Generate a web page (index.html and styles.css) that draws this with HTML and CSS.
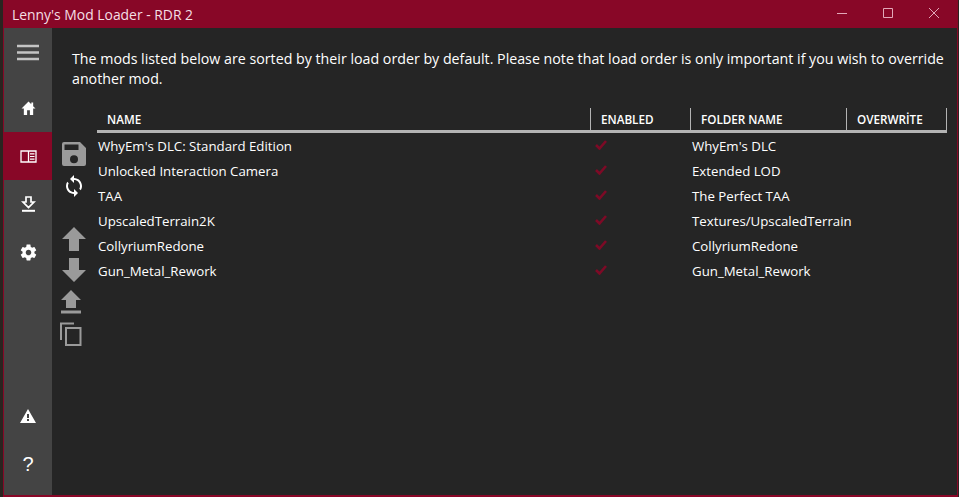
FILE: index.html
```html
<!DOCTYPE html>
<html lang="en">
<head>
  <meta charset="UTF-8" />
  <title>Lenny's Mod Loader - RDR 2</title>
  <link rel="stylesheet" href="styles.css">
</head>
<body>
  <div class="window">
    <header class="titlebar">
      <span class="title">Lenny's Mod Loader - RDR 2</span>
      <div class="win-buttons">
        <svg width="46" height="28" viewBox="0 0 46 28"><path d="M18 13.500h10" stroke="#e2a8b8" fill="none"/></svg>
        <svg width="46" height="28" viewBox="0 0 46 28"><path d="M18.500 8.500h9v9h-9z" stroke="#e2a8b8" fill="none"/></svg>
        <svg width="46" height="28" viewBox="0 0 46 28"><path d="M18 8l10 10M28 8l-10 10" stroke="#e2a8b8" fill="none"/></svg>
      </div>
    </header>
    <div class="main">
      <aside class="sidebar">
        <div class="nav-item nav-menu">
          <svg width="24" height="18" viewBox="0 0 24 18"><path d="M1 2h22M1 8.500h22M1 15h22" stroke="#c4c4c4" stroke-width="2.400" fill="none"/></svg>
        </div>
        <div class="nav-item">
          <svg width="15" height="14" viewBox="0 0 16 15"><path d="M8 0.500L0.500 8H3V15H6.500V10H9.500V15H13V8H15.500L13 5.500V1.500H11V3.500z" fill="#fff"/></svg>
        </div>
        <div class="nav-item active">
          <svg width="17" height="13" viewBox="0 0 17 13"><path d="M1 1h15v11H1z" stroke="#fff" stroke-width="1.300" fill="none"/><path d="M8.500 1v11" stroke="#fff" stroke-width="1.300"/><path d="M10 3.800h4.500M10 6.500h4.500M10 9.200h4.500" stroke="#fff" stroke-width="1.200"/></svg>
        </div>
        <div class="nav-item">
          <svg width="15" height="16" viewBox="0 0 15 16"><path d="M5 1h5v5h3L7.500 11.500 2 6h3z" fill="none" stroke="#fff" stroke-width="1.700"/><path d="M1 14.800h13" stroke="#fff" stroke-width="2"/></svg>
        </div>
        <div class="nav-item">
          <svg width="19" height="19" viewBox="0 0 24 24"><path fill="#fff" d="M19.430 12.980c.04-.32.070-.64.070-.98s-.030-.660-.070-.980l2.110-1.650c.19-.150.240-.420.120-.640l-2-3.460c-.12-.220-.390-.300-.610-.220l-2.490 1c-.520-.400-1.080-.730-1.690-.980l-.380-2.650C14.460 2.180 14.250 2 14 2h-4c-.250 0-.460.180-.490.420l-.380 2.650c-.610.250-1.170.590-1.690.980l-2.490-1c-.230-.090-.490 0-.610.220l-2 3.460c-.130.220-.070.490.120.640l2.110 1.650c-.040.320-.070.650-.070.980s.030.660.070.980l-2.110 1.650c-.190.150-.240.420-.120.640l2 3.460c.12.220.390.300.610.220l2.490-1c.520.400 1.080.730 1.690.980l.380 2.650c.030.240.240.420.490.420h4c.250 0 .460-.180.490-.420l.380-2.650c.610-.250 1.170-.590 1.690-.980l2.490 1c.230.090.490 0 .610-.220l2-3.460c.12-.220.070-.490-.120-.640l-2.110-1.650zM12 15.500c-1.930 0-3.500-1.570-3.500-3.500s1.570-3.500 3.500-3.500 3.500 1.570 3.500 3.500-1.570 3.500-3.500 3.500z"/></svg>
        </div>
        <div class="nav-spacer"></div>
        <div class="nav-item">
          <svg width="16" height="14" viewBox="0 0 16 14"><path fill-rule="evenodd" d="M8 0L16 14H0zM7 5v4h2V5zM7 10v2h2v-2z" fill="#fff"/></svg>
        </div>
        <div class="nav-item help">?</div>
      </aside>
      <section class="content">
        <p class="intro">The mods listed below are sorted by their load order by default. Please note that load order is only important if you wish to override another mod.</p>
        <div class="list-area">
          <div class="tools">
            <svg width="24" height="24" viewBox="0 0 24 24"><path fill-rule="evenodd" d="M2 0H18L24 6V22a2 2 0 0 1-2 2H2a2 2 0 0 1-2-2V2a2 2 0 0 1 2-2zM2.500 2.500V8H16.500V2.500zM12 13.300a4 4 0 1 0 0 8 4 4 0 0 0 0-8z" fill="#9a9a9a"/></svg>
            <svg class="tool-sync" width="18" height="22" viewBox="3 1 18 22"><path fill="#fff" d="M12 4V1L8 5l4 4V6c3.310 0 6 2.690 6 6 0 1.010-.250 1.970-.700 2.800l1.460 1.460C19.540 15.030 20 13.570 20 12c0-4.420-3.580-8-8-8zm0 14c-3.310 0-6-2.690-6-6 0-1.010.250-1.970.700-2.800L5.240 7.740C4.460 8.970 4 10.430 4 12c0 4.420 3.580 8 8 8v3l4-4-4-4v3z"/></svg>
            <svg class="tool-up" width="24" height="24" viewBox="0 0 24 24"><path d="M12 0L24 12H17V24H7V12H0z" fill="#9a9a9a"/></svg>
            <svg class="tool-down" width="24" height="24" viewBox="0 0 24 24"><path d="M12 24L24 12H17V0H7V12H0z" fill="#9a9a9a"/></svg>
            <svg class="tool-top" width="20" height="24" viewBox="0 0 20 24"><path d="M10 0L20 10H15V18H5V10H0z" fill="#9a9a9a"/><path d="M0 22h20" stroke="#9a9a9a" stroke-width="3"/></svg>
            <svg class="tool-copy" width="22" height="24" viewBox="0 0 22 24"><path d="M1 18V1.500H14" stroke="#9a9a9a" stroke-width="2" fill="none"/><path d="M6 6h14.500v17H6z" stroke="#9a9a9a" stroke-width="2" fill="none"/></svg>
          </div>
          <div class="mods">
            <div class="mods-head">
              <div class="col-name">NAME</div>
              <div class="col-enabled">ENABLED</div>
              <div class="col-folder">FOLDER NAME</div>
              <div class="col-over">OVERWRİTE</div>
            </div>
            <div class="mod-row">
              <div class="cell-name">WhyEm's DLC: Standard Edition</div>
              <div class="cell-enabled"><svg width="12" height="10" viewBox="0 0 12 10"><path d="M1 5l3.500 3.500L11 1" stroke="#7d0a26" stroke-width="2.600" fill="none"/></svg></div>
              <div class="cell-folder">WhyEm's DLC</div>
            </div>
            <div class="mod-row">
              <div class="cell-name">Unlocked Interaction Camera</div>
              <div class="cell-enabled"><svg width="12" height="10" viewBox="0 0 12 10"><path d="M1 5l3.500 3.500L11 1" stroke="#7d0a26" stroke-width="2.600" fill="none"/></svg></div>
              <div class="cell-folder">Extended LOD</div>
            </div>
            <div class="mod-row">
              <div class="cell-name">TAA</div>
              <div class="cell-enabled"><svg width="12" height="10" viewBox="0 0 12 10"><path d="M1 5l3.500 3.500L11 1" stroke="#7d0a26" stroke-width="2.600" fill="none"/></svg></div>
              <div class="cell-folder">The Perfect TAA</div>
            </div>
            <div class="mod-row">
              <div class="cell-name">UpscaledTerrain2K</div>
              <div class="cell-enabled"><svg width="12" height="10" viewBox="0 0 12 10"><path d="M1 5l3.500 3.500L11 1" stroke="#7d0a26" stroke-width="2.600" fill="none"/></svg></div>
              <div class="cell-folder">Textures/UpscaledTerrain</div>
            </div>
            <div class="mod-row">
              <div class="cell-name">CollyriumRedone</div>
              <div class="cell-enabled"><svg width="12" height="10" viewBox="0 0 12 10"><path d="M1 5l3.500 3.500L11 1" stroke="#7d0a26" stroke-width="2.600" fill="none"/></svg></div>
              <div class="cell-folder">CollyriumRedone</div>
            </div>
            <div class="mod-row">
              <div class="cell-name">Gun_Metal_Rework</div>
              <div class="cell-enabled"><svg width="12" height="10" viewBox="0 0 12 10"><path d="M1 5l3.500 3.500L11 1" stroke="#7d0a26" stroke-width="2.600" fill="none"/></svg></div>
              <div class="cell-folder">Gun_Metal_Rework</div>
            </div>
          </div>
        </div>
      </section>
    </div>
  </div>
</body>
</html>
```
FILE: styles.css
```css
html, body {
  margin: 0;
  height: 100%;
  overflow: hidden;
  background: #2a2420;
}
body {
  padding: 0 1px 0 3px;
  font-family: "Open Sans", "Noto Sans", sans-serif;
  color: #fff;
}
.window {
  height: 497px;
  box-sizing: border-box;
  display: flex;
  flex-direction: column;
  border-left: 1px solid #880727;
  border-right: 1px solid #880727;
  border-bottom: 2px solid #880727;
  background: #252525;
}
.titlebar {
  height: 28px;
  flex: none;
  background: #880727;
  display: flex;
  align-items: center;
  justify-content: space-between;
}
.title {
  padding-left: 8px;
  font-size: 13.900px;
  color: #f4dfe4;
}
.win-buttons {
  display: flex;
  height: 28px;
}
.main {
  flex: 1;
  display: flex;
  min-height: 0;
}
.sidebar {
  width: 48px;
  flex: none;
  padding-bottom: 7px;
  background: #444444;
  display: flex;
  flex-direction: column;
}
.nav-item {
  height: 48px;
  flex: none;
  display: flex;
  align-items: center;
  justify-content: center;
}
.nav-menu {
  height: 50px;
  padding-bottom: 6px;
}
.nav-item.active {
  background: #880727;
}
.nav-spacer {
  flex: 1;
}
.help {
  font-family: "Liberation Sans", sans-serif;
  font-size: 20px;
}
.content {
  flex: 1;
  min-width: 0;
  padding: 21px 10px 0 20px;
}
.intro {
  margin: 0 0 19px;
  font-size: 14.230px;
  line-height: 20px;
}
.list-area {
  display: flex;
  gap: 11px;
  margin-left: -11px;
}
.tools {
  width: 25px;
  padding-top: 34px;
  display: flex;
  flex-direction: column;
  align-items: center;
  flex: none;
}
.tool-sync { margin-top: 9px; }
.tool-up { margin-top: 30px; }
.tool-down { margin-top: 7px; }
.tool-top { margin-top: 8px; align-self: flex-start; }
.tool-copy { margin-top: 8px; align-self: flex-start; margin-left: -1px; }
.mods {
  flex: 1;
  min-width: 0;
}
.mods-head {
  display: flex;
  height: 22px;
  border-bottom: 3px solid #b4b4b4;
  font-size: 11.700px;
  font-weight: 600;
  line-height: 22px;
}
.mods-head > div {
  padding-left: 10px;
  border-right: 1px solid #b4b4b4;
  box-sizing: border-box;
}
.col-name { width: 494px; }
.col-enabled { width: 100px; }
.col-folder { width: 156px; }
.col-over { width: 100px; }
.mod-row {
  display: flex;
  height: 25px;
  align-items: center;
  font-size: 13.250px;
}
.cell-name { width: 494px; padding-left: 1px; box-sizing: border-box; }
.cell-enabled { width: 100px; padding-left: 4px; box-sizing: border-box; }
.cell-enabled svg { display: block; margin-top: -2px; }
.cell-folder { padding-left: 1px; white-space: nowrap; }
```
